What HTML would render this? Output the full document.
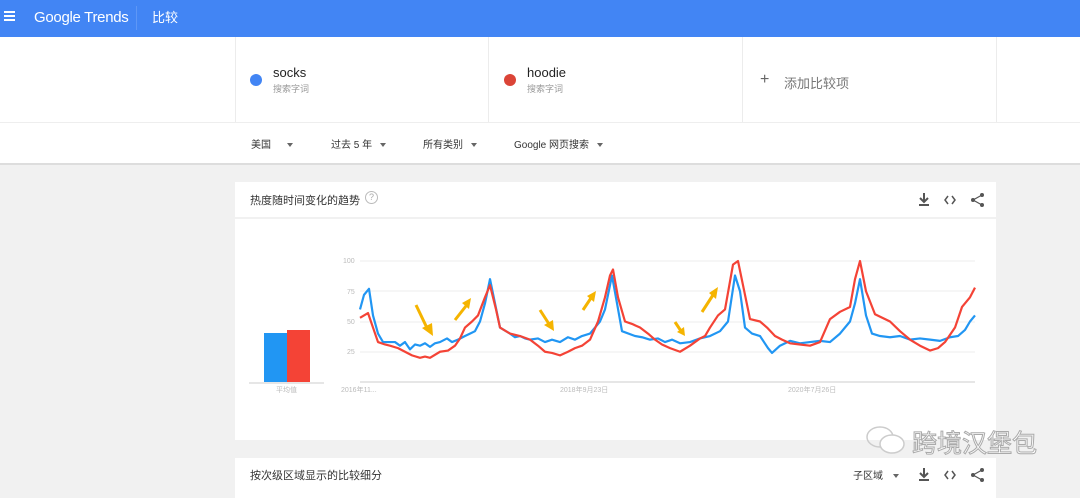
<!DOCTYPE html>
<html><head><meta charset="utf-8"><style>
*{margin:0;padding:0;box-sizing:border-box}
body{width:1080px;height:488px;overflow:hidden;background:#f1f1f1;font-family:"Liberation Sans","Noto Sans CJK SC",sans-serif;position:relative}
.abs{position:absolute}
.hdr{left:0;top:0;width:1080px;height:37px;background:#4285f4;color:#fff}
.top{left:0;top:37px;width:1080px;height:85px;background:#fff}
.sep{top:37px;width:1px;height:85px;background:#ececec}
.flt{left:0;top:122px;width:1080px;height:43px;background:#fff;border-top:1px solid #eee;border-bottom:2px solid #ddd;font-size:10px;color:#333}
.card{background:#fff;left:235px;width:761px}
.tri{display:inline-block;width:0;height:0;border-left:3.5px solid transparent;border-right:3.5px solid transparent;border-top:4px solid #666;vertical-align:middle;margin-left:8px}
</style></head><body>
<div class="abs hdr">
 <div class="abs" style="left:4px;top:11px;width:11px;height:2px;background:#fff;box-shadow:0 4px 0 #fff,0 8px 0 #fff"></div>
 <div class="abs" style="left:34px;top:9px;font-size:15px;letter-spacing:-0.3px">Google Trends</div>
 <div class="abs" style="left:136px;top:6px;width:1px;height:24px;background:#5e97f6"></div>
 <div class="abs" style="left:152px;top:7px;font-size:13px">比较</div>
</div>
<div class="abs top"></div>
<div class="abs sep" style="left:235px"></div><div class="abs sep" style="left:488px"></div><div class="abs sep" style="left:742px"></div><div class="abs sep" style="left:996px"></div>
<div class="abs" style="left:250px;top:74px;width:12px;height:12px;border-radius:50%;background:#4285f4"></div>
<div class="abs" style="left:273px;top:65px;font-size:13px;color:#222">socks</div>
<div class="abs" style="left:273px;top:82px;font-size:9px;color:#999">搜索字词</div>
<div class="abs" style="left:504px;top:74px;width:12px;height:12px;border-radius:50%;background:#db4437"></div>
<div class="abs" style="left:527px;top:65px;font-size:13px;color:#222">hoodie</div>
<div class="abs" style="left:527px;top:82px;font-size:9px;color:#999">搜索字词</div>
<div class="abs" style="left:760px;top:71px;font-size:16px;color:#666">+</div>
<div class="abs" style="left:784px;top:73px;font-size:13px;color:#777">添加比较项</div>
<div class="abs flt">
 <div class="abs" style="left:251px;top:13px">美国<span class="tri" style="margin-left:16px"></span></div>
 <div class="abs" style="left:331px;top:13px">过去 5 年<span class="tri"></span></div>
 <div class="abs" style="left:423px;top:13px">所有类别<span class="tri"></span></div>
 <div class="abs" style="left:514px;top:13px">Google 网页搜索<span class="tri"></span></div>
</div>
<div class="abs card" style="top:182px;height:258px"></div>
<div class="abs" style="left:235px;top:217px;width:761px;height:2px;background:#f1f1f1"></div>
<div class="abs" style="left:250px;top:192px;font-size:11px;color:#333">热度随时间变化的趋势</div>
<div class="abs" style="left:365px;top:191px;width:13px;height:13px;border:1px solid #bbb;border-radius:50%;font-size:9px;color:#aaa;text-align:center;line-height:11px">?</div>
<svg class="abs" style="left:910px;top:190px" width="80" height="20" viewBox="0 0 80 20">
 <path d="M14 3v8M10 8l4 4 4-4M9 15h10" stroke="#555" stroke-width="2" fill="none"/>
 <path d="M38 6l-3 4 3 4M42 6l3 4-3 4" stroke="#555" stroke-width="1.5" fill="none"/>
 <circle cx="72" cy="5" r="2" fill="#555"/><circle cx="63" cy="10" r="2" fill="#555"/><circle cx="72" cy="15" r="2" fill="#555"/>
 <path d="M72 5L63 10 72 15" stroke="#555" stroke-width="1.2" fill="none"/>
</svg>
<svg class="abs" style="left:0;top:0" width="1080" height="488">
 <g stroke="#eee" stroke-width="1"><line x1="360" y1="261" x2="975" y2="261"/><line x1="360" y1="291" x2="975" y2="291"/><line x1="360" y1="322" x2="975" y2="322"/><line x1="360" y1="352" x2="975" y2="352"/></g>
 <line x1="360" y1="382" x2="975" y2="382" stroke="#ccc"/>
 <line x1="249" y1="383" x2="324" y2="383" stroke="#ccc"/>
 <rect x="264" y="333" width="23" height="49" fill="#2196f3"/><rect x="287" y="330" width="23" height="52" fill="#f44336"/>
 <g font-size="7" fill="#bbb" font-family="Liberation Sans,Noto Sans CJK SC,sans-serif">
 <text x="343" y="263">100</text><text x="347" y="294">75</text><text x="347" y="324">50</text><text x="347" y="354">25</text>
 <text x="341" y="392">2016年11...</text><text x="560" y="392">2018年9月23日</text><text x="788" y="392">2020年7月26日</text><text x="276" y="392">平均值</text></g>
 <g transform="translate(0,382) scale(1,-1.21)" fill="none" stroke-width="2.2" stroke-linejoin="round">
 <polyline vector-effect="non-scaling-stroke" stroke="#2196f3" points="360,60 364,72 369,77 373,55 378,40 383,33 395,33 400,30 405,33 410,27 415,31 420,30 425,32 430,29 435,32 440,33 447,36 452,33 458,35 465,38 470,40 475,42 480,50 485,65 490,85 495,65 500,45 510,40 515,37 520,38 525,36 530,35 538,36 545,33 552,35 560,33 568,37 575,35 582,38 590,40 595,45 600,50 605,60 612,88 617,65 622,42 635,38 642,37 650,35 658,36 665,33 672,35 680,32 690,33 700,36 710,38 720,42 728,50 735,88 740,75 745,45 752,40 760,38 764,33 768,28 772,24 780,30 790,34 800,32 810,33 820,34 830,33 840,40 850,50 855,65 860,85 866,55 872,40 880,38 890,37 900,38 910,35 920,36 930,35 940,34 950,37 958,38 965,43 970,50 975,55"/>
 <polyline vector-effect="non-scaling-stroke" stroke="#f44336" points="360,53 368,57 373,45 378,33 385,31 390,30 398,28 405,25 412,22 420,20 425,21 430,20 440,25 448,26 455,30 460,36 465,45 472,50 478,55 485,70 490,80 496,60 500,45 510,40 520,38 530,35 538,30 545,25 552,24 560,22 568,25 575,28 582,30 590,35 598,50 605,70 610,88 613,93 618,70 625,50 632,48 640,45 648,40 655,35 662,31 670,28 680,25 690,30 700,36 705,38 710,45 718,55 725,60 733,97 738,100 743,80 750,52 760,50 767,45 775,38 782,35 790,32 800,31 810,30 820,33 830,52 840,58 850,62 855,85 860,100 866,75 875,56 890,50 900,42 910,35 920,30 930,26 938,28 945,33 955,45 962,62 970,70 975,78"/>
 </g>
 <g stroke="#f5b400" stroke-width="3" fill="#f5b400">
 <line x1="416" y1="305" x2="427" y2="328"/><polygon points="422,328 433,336 432,323" stroke="none"/>
 <line x1="455" y1="320" x2="466" y2="306"/><polygon points="462,303 471,298 469,309" stroke="none"/>
 <line x1="540" y1="310" x2="549" y2="324"/><polygon points="544,325 554,331 553,320" stroke="none"/>
 <line x1="583" y1="310" x2="591" y2="298"/><polygon points="587,296 596,291 594,302" stroke="none"/>
 <line x1="675" y1="322" x2="681" y2="331"/><polygon points="677,332 685,336 684,327" stroke="none"/>
 <line x1="702" y1="312" x2="713" y2="295"/><polygon points="709,293 718,287 716,299" stroke="none"/>
 </g>
</svg>
<div class="abs card" style="top:458px;height:40px"></div>
<div class="abs" style="left:250px;top:467px;font-size:11px;color:#333">按次级区域显示的比较细分</div>
<div class="abs" style="left:853px;top:467px;font-size:10px;color:#333">子区域<span class="tri" style="margin-left:10px"></span></div>
<svg class="abs" style="left:910px;top:465px" width="80" height="20" viewBox="0 0 80 20">
 <path d="M14 3v8M10 8l4 4 4-4M9 15h10" stroke="#555" stroke-width="2" fill="none"/>
 <path d="M38 6l-3 4 3 4M42 6l3 4-3 4" stroke="#555" stroke-width="1.5" fill="none"/>
 <circle cx="72" cy="5" r="2" fill="#555"/><circle cx="63" cy="10" r="2" fill="#555"/><circle cx="72" cy="15" r="2" fill="#555"/>
 <path d="M72 5L63 10 72 15" stroke="#555" stroke-width="1.2" fill="none"/>
</svg>
<svg class="abs" style="left:864px;top:424px" width="48" height="34">
 <ellipse cx="16" cy="13" rx="13" ry="10" fill="none" stroke="#ccc" stroke-width="1.5"/>
 <ellipse cx="28" cy="20" rx="12" ry="9" fill="#fff" stroke="#ccc" stroke-width="1.5"/>
</svg>
<div class="abs" style="left:912px;top:424px;font-size:25px;color:#fff;-webkit-text-stroke:1px #aaa">跨境汉堡包</div>
</body></html>
